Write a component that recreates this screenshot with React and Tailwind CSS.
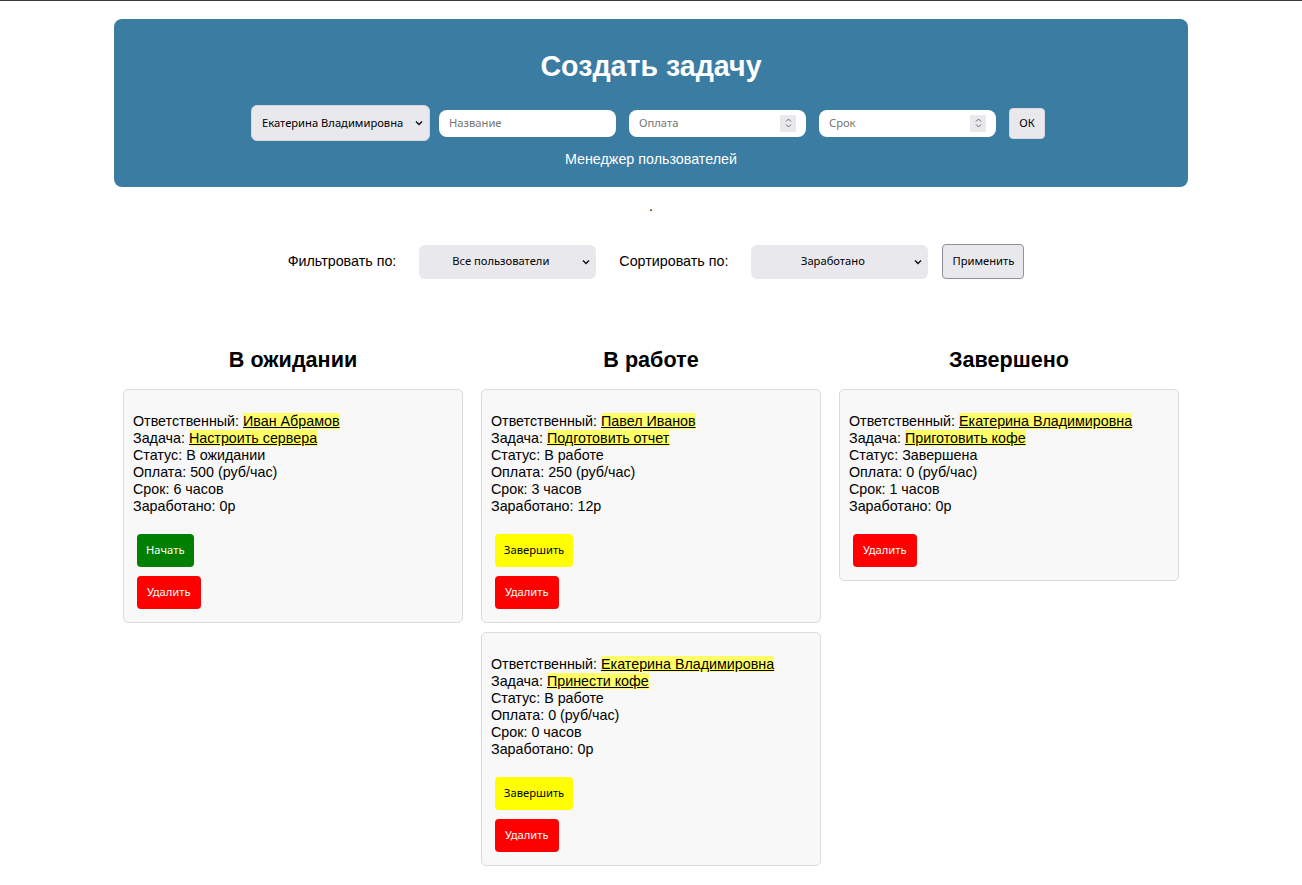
import React from 'react';

const columns = [
  {
    title: 'В ожидании',
    tasks: [
      { user: 'Иван Абрамов', name: 'Настроить сервера', status: 'В ожидании', pay: 500, term: 6, earned: 0, action: 'start' },
    ],
  },
  {
    title: 'В работе',
    tasks: [
      { user: 'Павел Иванов', name: 'Подготовить отчет', status: 'В работе', pay: 250, term: 3, earned: 12, action: 'finish' },
      { user: 'Екатерина Владимировна', name: 'Принести кофе', status: 'В работе', pay: 0, term: 0, earned: 0, action: 'finish' },
    ],
  },
  {
    title: 'Завершено',
    tasks: [
      { user: 'Екатерина Владимировна', name: 'Приготовить кофе', status: 'Завершена', pay: 0, term: 1, earned: 0, action: null },
    ],
  },
];

function Chevron() {
  return (
    <svg width="8" height="6" viewBox="0 0 8 6" className="shrink-0">
      <path d="M1 1.5 L4 4.5 L7 1.5" fill="none" stroke="#111" strokeWidth="1.4" />
    </svg>
  );
}

function Spinner() {
  return (
    <span className="flex h-[17px] w-[16px] flex-col items-center justify-center gap-[2px] bg-[#e9e9ed]">
      <svg width="7" height="4" viewBox="0 0 7 4"><path d="M1 3.5 L3.5 1 L6 3.5" fill="none" stroke="#666" strokeWidth="1" /></svg>
      <svg width="7" height="4" viewBox="0 0 7 4"><path d="M1 0.5 L3.5 3 L6 0.5" fill="none" stroke="#666" strokeWidth="1" /></svg>
    </span>
  );
}

function FakeInput({ placeholder, number, className = '' }) {
  return (
    <div className={`flex h-[27px] w-[177px] items-center justify-between rounded-lg bg-white pl-[10px] pr-[10px] text-[11.2px] text-[#757575] ${className}`}>
      <span>{placeholder}</span>
      {number && <Spinner />}
    </div>
  );
}

function TaskCard({ task }) {
  return (
    <div className="rounded-[5px] border border-[#dcdcdc] bg-[#f8f8f8] px-[9px] pb-[13px] pt-[23px]">
      <div className="text-[14.3px] leading-[17px] text-black">
        <div>Ответственный: <span className="bg-[#ffff66] underline">{task.user}</span></div>
        <div>Задача: <span className="bg-[#ffff66] underline">{task.name}</span></div>
        <div>Статус: {task.status}</div>
        <div>Оплата: {task.pay} (руб/час)</div>
        <div>Срок: {task.term} часов</div>
        <div>Заработано: {task.earned}р</div>
      </div>
      <div className="mt-[19px] flex flex-col items-start gap-[9px] pl-[4px] font-['Noto_Sans',sans-serif] text-[11.2px]">
        {task.action === 'start' && (
          <button className="h-[33px] rounded-[4px] bg-[#008000] px-[9px] text-white">Начать</button>
        )}
        {task.action === 'finish' && (
          <button className="h-[33px] rounded-[4px] bg-[#ffff00] px-[9px] text-black">Завершить</button>
        )}
        <button className="h-[33px] rounded-[4px] bg-[#ff0000] px-[10px] text-white">Удалить</button>
      </div>
    </div>
  );
}

export default function App() {
  return (
    <div className="min-h-screen bg-white pb-[18px] font-['Liberation_Sans',Arial,sans-serif] text-black">
      <div className="h-px bg-[#3a3a3a]" />

      {/* Header */}
      <div className="mx-auto mt-[18px] w-[1074px] rounded-lg bg-[#3b7ca3] pb-[19px] pt-[31px]">
        <h1 className="text-center text-[28.6px] font-bold leading-[32px] text-white">Создать задачу</h1>
        <div className="mt-[23px] flex h-[36px] items-center justify-center pr-[6px] font-['Noto_Sans',sans-serif]">
          <div className="flex h-[36px] w-[179px] items-center justify-between rounded-md border border-[#d6d6dc] bg-[#e9e9ed] pl-[10px] pr-[6px] text-[11.2px] text-black">
            <span>Екатерина Владимировна</span>
            <Chevron />
          </div>
          <FakeInput placeholder="Название" className="ml-[9px]" />
          <FakeInput placeholder="Оплата" number className="ml-[13px]" />
          <FakeInput placeholder="Срок" number className="ml-[13px]" />
          <button className="ml-[13px] h-[31px] w-[36px] rounded-[4px] border border-[#d6d6dc] bg-[#e9e9ed] text-[11.2px] text-black">ОК</button>
        </div>
        <div className="mt-[10px] text-center text-[14.3px] leading-[17px] text-white">Менеджер пользователей</div>
      </div>

      <div className="mt-[11px] text-center text-[14.3px] leading-[17px]">.</div>

      {/* Filters */}
      <div className="mt-[29px] flex h-[35px] items-center justify-center pl-[10px] text-[14.3px]">
        <span>Фильтровать по:</span>
        <div className="ml-[23px] flex h-[34px] w-[177px] items-center rounded-md bg-[#e9e9ed] pr-[6px] font-['Noto_Sans',sans-serif] text-[11.2px]">
          <span className="flex-1 text-center">Все пользователи</span>
          <Chevron />
        </div>
        <span className="ml-[23px]">Сортировать по:</span>
        <div className="ml-[23px] flex h-[34px] w-[177px] items-center rounded-md bg-[#e9e9ed] pr-[6px] font-['Noto_Sans',sans-serif] text-[11.2px]">
          <span className="flex-1 text-center">Заработано</span>
          <Chevron />
        </div>
        <button className="ml-[14px] h-[35px] w-[82px] rounded-[4px] border border-[#8f8f9d] bg-[#e9e9ed] font-['Noto_Sans',sans-serif] text-[11.2px]">Применить</button>
      </div>

      {/* Board */}
      <div className="mx-auto mt-[68px] grid w-[1056px] grid-cols-3 gap-[18px]">
        {columns.map((col) => (
          <div key={col.title}>
            <h2 className="text-center text-[21.6px] font-bold leading-[26px]">{col.title}</h2>
            <div className="mt-[16px] flex flex-col gap-[9px]">
              {col.tasks.map((task) => (
                <TaskCard key={task.name} task={task} />
              ))}
            </div>
          </div>
        ))}
      </div>
    </div>
  );
}
